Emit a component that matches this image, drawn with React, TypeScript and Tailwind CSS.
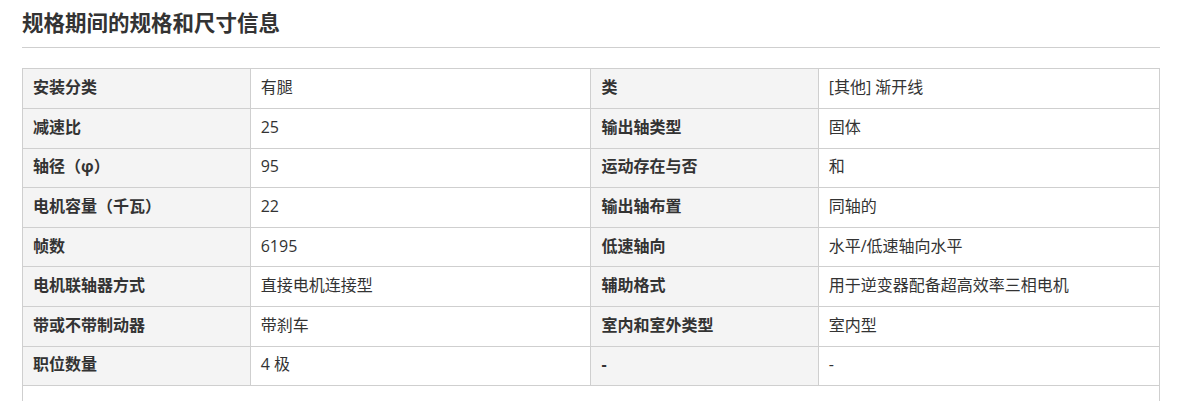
import React from "react";

type Spec = { label: string; value: string };

const rows: [Spec, Spec][] = [
    [
        { label: "安装分类", value: "有腿" },
        { label: "类", value: "[其他] 渐开线" },
    ],
    [
        { label: "减速比", value: "25" },
        { label: "输出轴类型", value: "固体" },
    ],
    [
        { label: "轴径（φ）", value: "95" },
        { label: "运动存在与否", value: "和" },
    ],
    [
        { label: "电机容量（千瓦）", value: "22" },
        { label: "输出轴布置", value: "同轴的" },
    ],
    [
        { label: "帧数", value: "6195" },
        { label: "低速轴向", value: "水平/低速轴向水平" },
    ],
    [
        { label: "电机联轴器方式", value: "直接电机连接型" },
        { label: "辅助格式", value: "用于逆变器配备超高效率三相电机" },
    ],
    [
        { label: "带或不带制动器", value: "带刹车" },
        { label: "室内和室外类型", value: "室内型" },
    ],
    [
        { label: "职位数量", value: "4 极" },
        { label: "-", value: "-" },
    ],
];

export default function App() {
    return (
        <div
            className="min-h-[401px] bg-white pl-[22px] pr-[18px] text-[#333]"
            style={{ fontFamily: '"Open Sans", "Noto Sans CJK SC", sans-serif' }}
        >
            <h2 className="border-b border-[#cfcfcf] pb-[2px] text-[21.5px] font-bold leading-[45px] text-[#333]">
                规格期间的规格和尺寸信息
            </h2>
            <div className="mt-[20px] border border-[#cfcfcf] pb-[30px]">
                <table className="w-full table-fixed border-collapse text-[16px]">
                    <colgroup>
                        <col className="w-[20%]" />
                        <col className="w-[30%]" />
                        <col className="w-[20%]" />
                        <col className="w-[30%]" />
                    </colgroup>
                    <tbody>
                        {rows.map((pair, i) => (
                            <tr key={i} className="h-[39.6px] border-b border-[#cfcfcf]">
                                {pair.map((spec, j) => (
                                    <React.Fragment key={j}>
                                        <th className="border-r border-[#cfcfcf] bg-[#f4f4f4] px-[10px] pb-[3px] text-left font-bold">
                                            {spec.label}
                                        </th>
                                        <td
                                            className={
                                                j === 0
                                                    ? "border-r border-[#cfcfcf] px-[10px] pb-[3px]"
                                                    : "px-[10px] pb-[3px]"
                                            }
                                        >
                                            {spec.value}
                                        </td>
                                    </React.Fragment>
                                ))}
                            </tr>
                        ))}
                    </tbody>
                </table>
            </div>
        </div>
    );
}
